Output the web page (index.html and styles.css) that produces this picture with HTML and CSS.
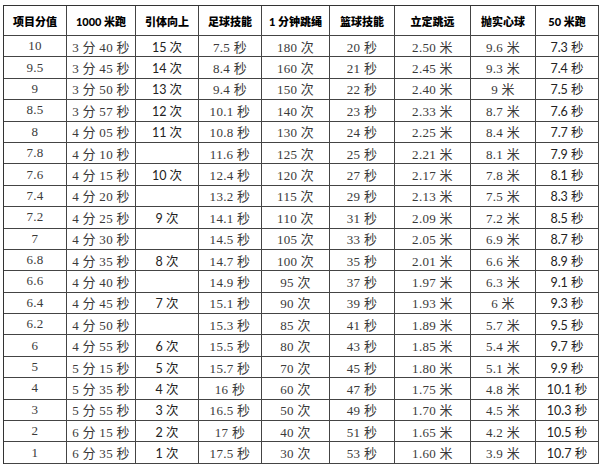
FILE: index.html
```html
<!DOCTYPE html>
<html lang="zh-CN">
<head>
<meta charset="utf-8">
<title>体育评分标准</title>
<link rel="stylesheet" href="styles.css">
</head>
<body>
<table class="score">
  <colgroup>
    <col class="w63"><col class="w69"><col class="w63"><col class="w63"><col class="w68"><col class="w65"><col class="w76"><col class="w65"><col class="w63">
  </colgroup>
  <thead>
    <tr class="head">
      <th>项目分值</th><th>1000 米跑</th><th>引体向上</th><th>足球技能</th><th>1 分钟跳绳</th><th>篮球技能</th><th>立定跳远</th><th>抛实心球</th><th>50 米跑</th>
    </tr>
  </thead>
  <tbody>
    <tr><td class="s">10</td><td class="s">3 分 40 秒</td><td class="a">15 次</td><td class="s">7.5 秒</td><td class="s">180 次</td><td class="s">20 秒</td><td class="s">2.50 米</td><td class="s">9.6 米</td><td class="a">7.3 秒</td></tr>
    <tr><td class="s">9.5</td><td class="s">3 分 45 秒</td><td class="a">14 次</td><td class="s">8.4 秒</td><td class="s">160 次</td><td class="s">21 秒</td><td class="s">2.45 米</td><td class="s">9.3 米</td><td class="a">7.4 秒</td></tr>
    <tr><td class="s">9</td><td class="s">3 分 50 秒</td><td class="a">13 次</td><td class="s">9.4 秒</td><td class="s">150 次</td><td class="s">22 秒</td><td class="s">2.40 米</td><td class="s">9 米</td><td class="a">7.5 秒</td></tr>
    <tr><td class="s">8.5</td><td class="s">3 分 57 秒</td><td class="a">12 次</td><td class="s">10.1 秒</td><td class="s">140 次</td><td class="s">23 秒</td><td class="s">2.33 米</td><td class="s">8.7 米</td><td class="a">7.6 秒</td></tr>
    <tr><td class="s">8</td><td class="s">4 分 05 秒</td><td class="a">11 次</td><td class="s">10.8 秒</td><td class="s">130 次</td><td class="s">24 秒</td><td class="s">2.25 米</td><td class="s">8.4 米</td><td class="a">7.7 秒</td></tr>
    <tr><td class="s">7.8</td><td class="s">4 分 10 秒</td><td class="a"></td><td class="s">11.6 秒</td><td class="s">125 次</td><td class="s">25 秒</td><td class="s">2.21 米</td><td class="s">8.1 米</td><td class="a">7.9 秒</td></tr>
    <tr><td class="s">7.6</td><td class="s">4 分 15 秒</td><td class="a">10 次</td><td class="s">12.4 秒</td><td class="s">120 次</td><td class="s">27 秒</td><td class="s">2.17 米</td><td class="s">7.8 米</td><td class="a">8.1 秒</td></tr>
    <tr><td class="s">7.4</td><td class="s">4 分 20 秒</td><td class="a"></td><td class="s">13.2 秒</td><td class="s">115 次</td><td class="s">29 秒</td><td class="s">2.13 米</td><td class="s">7.5 米</td><td class="a">8.3 秒</td></tr>
    <tr><td class="s">7.2</td><td class="s">4 分 25 秒</td><td class="a">9 次</td><td class="s">14.1 秒</td><td class="s">110 次</td><td class="s">31 秒</td><td class="s">2.09 米</td><td class="s">7.2 米</td><td class="a">8.5 秒</td></tr>
    <tr><td class="s">7</td><td class="s">4 分 30 秒</td><td class="a"></td><td class="s">14.5 秒</td><td class="s">105 次</td><td class="s">33 秒</td><td class="s">2.05 米</td><td class="s">6.9 米</td><td class="a">8.7 秒</td></tr>
    <tr><td class="s">6.8</td><td class="s">4 分 35 秒</td><td class="a">8 次</td><td class="s">14.7 秒</td><td class="s">100 次</td><td class="s">35 秒</td><td class="s">2.01 米</td><td class="s">6.6 米</td><td class="a">8.9 秒</td></tr>
    <tr><td class="s">6.6</td><td class="s">4 分 40 秒</td><td class="a"></td><td class="s">14.9 秒</td><td class="s">95 次</td><td class="s">37 秒</td><td class="s">1.97 米</td><td class="s">6.3 米</td><td class="a">9.1 秒</td></tr>
    <tr><td class="s">6.4</td><td class="s">4 分 45 秒</td><td class="a">7 次</td><td class="s">15.1 秒</td><td class="s">90 次</td><td class="s">39 秒</td><td class="s">1.93 米</td><td class="s">6 米</td><td class="a">9.3 秒</td></tr>
    <tr><td class="s">6.2</td><td class="s">4 分 50 秒</td><td class="a"></td><td class="s">15.3 秒</td><td class="s">85 次</td><td class="s">41 秒</td><td class="s">1.89 米</td><td class="s">5.7 米</td><td class="a">9.5 秒</td></tr>
    <tr><td class="s">6</td><td class="s">4 分 55 秒</td><td class="a">6 次</td><td class="s">15.5 秒</td><td class="s">80 次</td><td class="s">43 秒</td><td class="s">1.85 米</td><td class="s">5.4 米</td><td class="a">9.7 秒</td></tr>
    <tr><td class="s">5</td><td class="s">5 分 15 秒</td><td class="a">5 次</td><td class="s">15.7 秒</td><td class="s">70 次</td><td class="s">45 秒</td><td class="s">1.80 米</td><td class="s">5.1 米</td><td class="a">9.9 秒</td></tr>
    <tr><td class="s">4</td><td class="s">5 分 35 秒</td><td class="a">4 次</td><td class="s">16 秒</td><td class="s">60 次</td><td class="s">47 秒</td><td class="s">1.75 米</td><td class="s">4.8 米</td><td class="a">10.1 秒</td></tr>
    <tr><td class="s">3</td><td class="s">5 分 55 秒</td><td class="a">3 次</td><td class="s">16.5 秒</td><td class="s">50 次</td><td class="s">49 秒</td><td class="s">1.70 米</td><td class="s">4.5 米</td><td class="a">10.3 秒</td></tr>
    <tr><td class="s">2</td><td class="s">6 分 15 秒</td><td class="a">2 次</td><td class="s">17 秒</td><td class="s">40 次</td><td class="s">51 秒</td><td class="s">1.65 米</td><td class="s">4.2 米</td><td class="a">10.5 秒</td></tr>
    <tr><td class="s">1</td><td class="s">6 分 35 秒</td><td class="a">1 次</td><td class="s">17.5 秒</td><td class="s">30 次</td><td class="s">53 秒</td><td class="s">1.60 米</td><td class="s">3.9 米</td><td class="a">10.7 秒</td></tr>
  </tbody>
</table>
</body>
</html>
```

FILE: styles.css
```css
html, body {
  margin: 0;
  padding: 0;
  background: #ffffff;
}

body {
  padding: 5px 0 0 3px;
}

.score {
  border-collapse: separate;
  border-spacing: 0;
  table-layout: fixed;
  width: 596px;
  border-top: 1px solid #333;
  border-left: 1px solid #333;
}

.w63 { width: 63px; }
.w65 { width: 65px; }
.w68 { width: 68px; }
.w69 { width: 69px; }
.w76 { width: 76px; }

.score th,
.score td {
  border-right: 1px solid #444;
  border-bottom: 1px solid #444;
  padding: 0;
  text-align: center;
  vertical-align: middle;
  white-space: nowrap;
}

.head {
  height: 30px;
}

.head th {
  font-family: "Lato", "Noto Sans CJK SC", sans-serif;
  font-weight: 900;
  font-size: 11px;
  color: #000;
}

tbody tr {
  height: 21.4px;
}

.s {
  font-family: "Liberation Serif", "Noto Sans CJK SC", serif;
  font-size: 13px;
  color: #3a3a3a;
  letter-spacing: 0.3px;
}

.a {
  font-family: "Lato", "Noto Sans CJK SC", sans-serif;
  font-size: 12.5px;
  color: #222;
}
```
